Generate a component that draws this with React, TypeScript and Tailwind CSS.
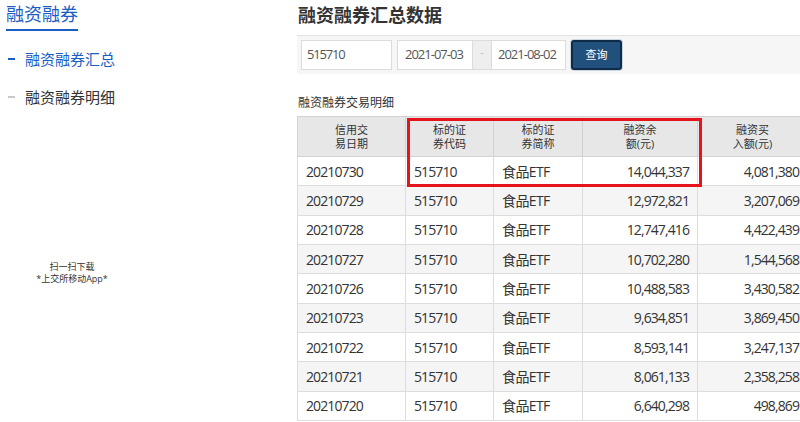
import { FC } from "react";

const rows = [
  ["20210730", "515710", "食品ETF", "14,044,337", "4,081,380"],
  ["20210729", "515710", "食品ETF", "12,972,821", "3,207,069"],
  ["20210728", "515710", "食品ETF", "12,747,416", "4,422,439"],
  ["20210727", "515710", "食品ETF", "10,702,280", "1,544,568"],
  ["20210726", "515710", "食品ETF", "10,488,583", "3,430,582"],
  ["20210723", "515710", "食品ETF", "9,634,851", "3,869,450"],
  ["20210722", "515710", "食品ETF", "8,593,141", "3,247,137"],
  ["20210721", "515710", "食品ETF", "8,061,133", "2,358,258"],
  ["20210720", "515710", "食品ETF", "6,640,298", "498,869"],
];

const headers = [
  ["信用交", "易日期"],
  ["标的证", "券代码"],
  ["标的证", "券简称"],
  ["融资余", "额(元)"],
  ["融资买", "入额(元)"],
];

const Sidebar: FC = () => (
  <aside className="w-[297px] shrink-0 pl-[6px]">
    <div className="inline-block border-b-2 border-[#1a5dc4] pt-[2px] pb-[2px] text-[18px] leading-[25px] text-[#1a5dc4]">
      融资融券
    </div>
    <ul className="mt-[18px] text-[15px] leading-[20px]">
      <li className="flex items-center text-[#1a5dc4]">
        <span className="ml-[2px] mr-[10px] h-[2px] w-[7px] bg-[#1a5dc4]" />
        融资融券汇总
      </li>
      <li className="mt-[18px] flex items-center text-[#333]">
        <span className="ml-[2px] mr-[10px] h-[2px] w-[7px] bg-[#c8c8c8]" />
        融资融券明细
      </li>
    </ul>
    <div className="mt-[154px] w-[132px] text-center text-[9px] leading-[12px] text-[#333]">
      <div>扫一扫下载</div>
      <div>*上交所移动App*</div>
    </div>
  </aside>
);

const SearchBar: FC = () => (
  <div className="mt-[8px] flex h-[39px] items-center border-t border-[#e3e3e3] bg-[#f6f6f6] pl-[4px] whitespace-nowrap">
    <div className="flex h-[30px] w-[91px] items-center border border-[#dcdcdc] bg-white pl-[5px] text-[13px] tracking-[-1.2px] text-[#555]">
      515710
    </div>
    <div className="ml-[5px] flex h-[30px]">
      <div className="flex w-[76px] items-center border border-[#dcdcdc] bg-white pl-[7px] text-[13px] tracking-[-1px] text-[#555]">
        2021-07-03
      </div>
      <div className="flex w-[18px] items-start justify-center border-y border-[#dcdcdc] bg-[#eeeeee] pt-[4px] text-[10px] text-[#bbb]">
        -
      </div>
      <div className="flex w-[75px] items-center border border-[#dcdcdc] bg-white pl-[6px] text-[13px] tracking-[-1px] text-[#555]">
        2021-08-02
      </div>
    </div>
    <button className="ml-[5px] flex h-[30px] w-[51px] items-center justify-center rounded-[3px] border-2 border-[#0f2b47] bg-[#22507d] text-[11px] text-white shadow-[0_0_0_1px_#c9d6e3]">
      查询
    </button>
  </div>
);

const App: FC = () => {
  return (
    <div className="flex h-[422px] w-[800px] overflow-hidden bg-white font-['Open_Sans','Noto_Sans_CJK_SC',sans-serif] text-[#333]">
      <Sidebar />
      <main className="relative w-[503px] shrink-0">
        <h1 className="mt-[3px] pl-px text-[18px] font-bold leading-[24px] text-[#333]">
          融资融券汇总数据
        </h1>
        <SearchBar />
        <div className="mt-[21px] pl-px text-[12px] leading-[16px]">融资融券交易明细</div>
        <table className="mt-[5px] w-[510px] table-fixed border-collapse text-[14px]">
          <colgroup>
            <col className="w-[108px]" />
            <col className="w-[88px]" />
            <col className="w-[89px]" />
            <col className="w-[115px]" />
            <col className="w-[110px]" />
          </colgroup>
          <thead>
            <tr className="h-[40px] bg-[#e7e7e7]">
              {headers.map(([a, b], i) => (
                <th
                  key={i}
                  className="border border-[#d2d2d2] p-0 text-center text-[11px] font-normal leading-[14px] text-[#333]"
                >
                  <div>{a}</div>
                  <div>{b}</div>
                </th>
              ))}
            </tr>
          </thead>
          <tbody>
            {rows.map((r, i) => (
              <tr key={r[0]} className={i % 2 === 1 ? "h-[29.33px] bg-[#f5f5f5]" : "h-[29.33px] bg-white"}>
                {r.map((c, j) => (
                  <td
                    key={j}
                    className={
                      j >= 3
                        ? "whitespace-nowrap border border-[#dddddd] px-[8px] py-0 text-right tracking-[-0.9px] text-[#333]"
                        : j === 2
                          ? "whitespace-nowrap border border-[#dddddd] px-[8px] py-0 text-left tracking-[-0.6px] text-[#333]"
                          : "whitespace-nowrap border border-[#dddddd] px-[8px] py-0 text-left tracking-[-0.9px] text-[#333]"
                    }
                  >
                    {c}
                  </td>
                ))}
              </tr>
            ))}
          </tbody>
        </table>
        <div className="pointer-events-none absolute left-[110px] top-[118px] h-[69px] w-[295px] border-[3px] border-[#e5131b]" />
      </main>
    </div>
  );
};

export default App;
